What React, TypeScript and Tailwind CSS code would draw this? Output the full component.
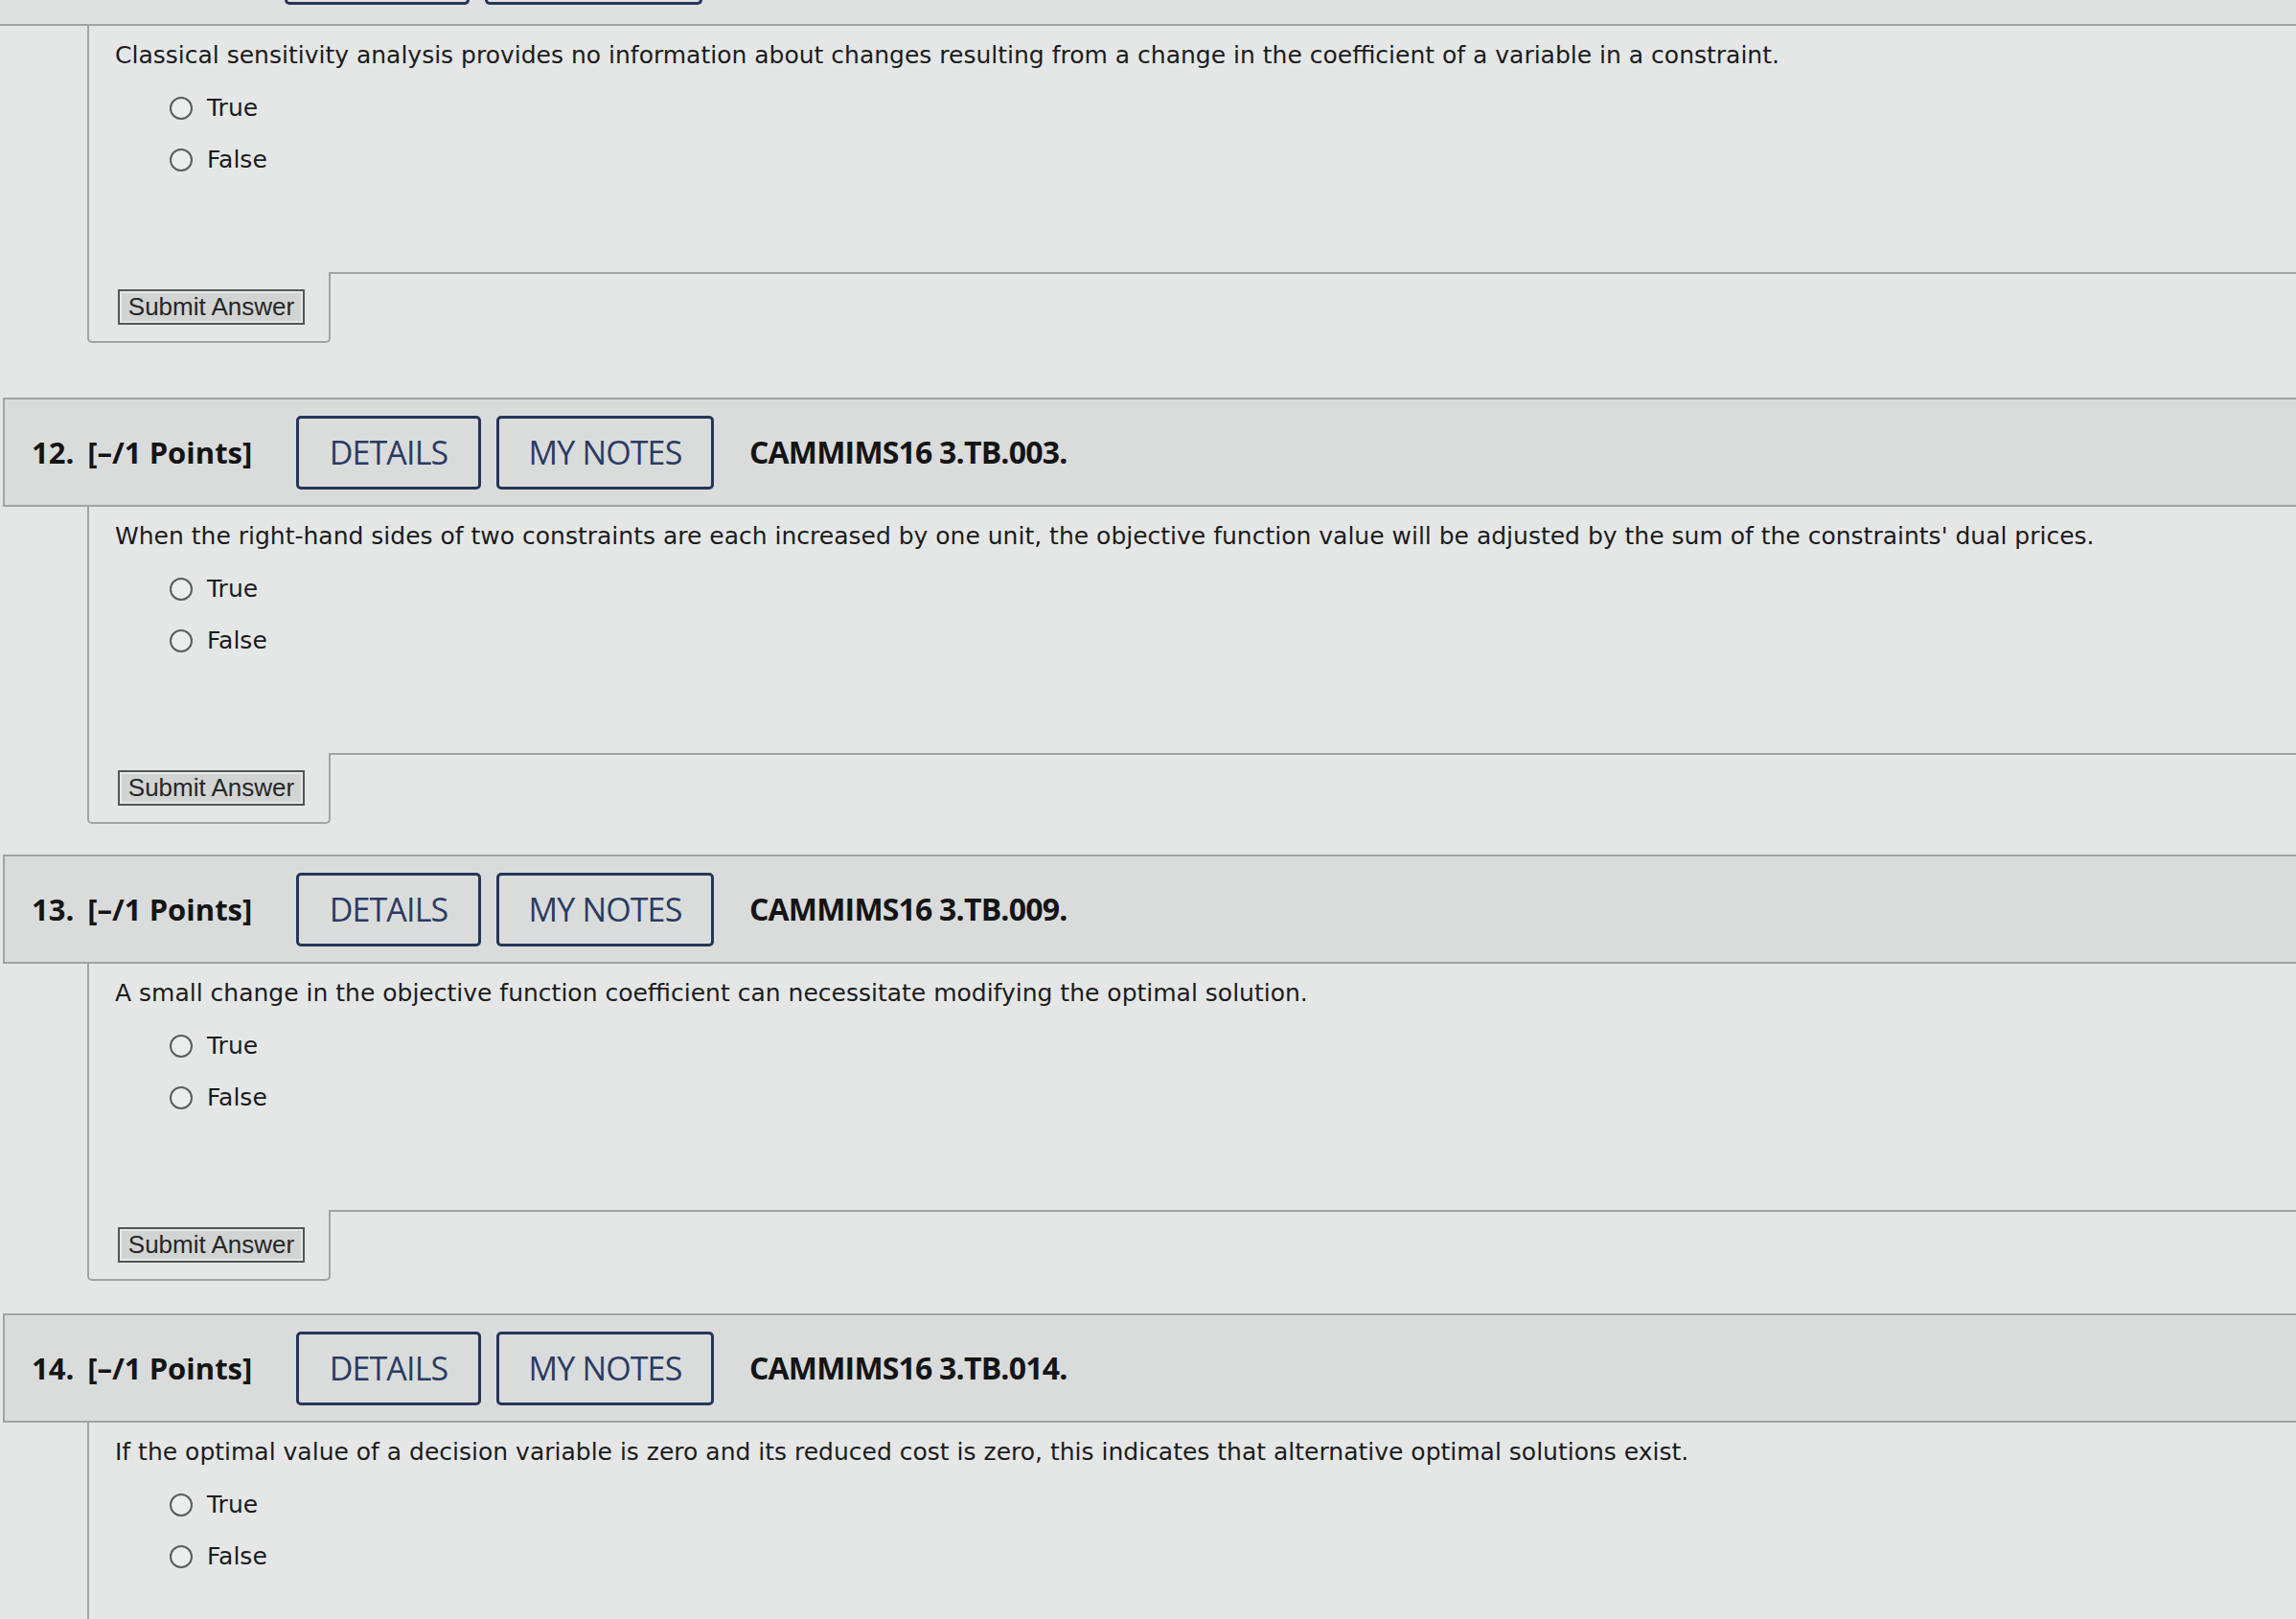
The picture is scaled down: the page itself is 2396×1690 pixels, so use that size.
import React from 'react';

const QUESTIONS = [
  {
    num: 11,
    code: 'CAMMIMS16 3.TB.002.',
    text: 'Classical sensitivity analysis provides no information about changes resulting from a change in the coefficient of a variable in a constraint.',
    gap: 'mb-[57px]',
  },
  {
    num: 12,
    code: 'CAMMIMS16 3.TB.003.',
    text: "When the right-hand sides of two constraints are each increased by one unit, the objective function value will be adjusted by the sum of the constraints' dual prices.",
    gap: 'mb-[32px]',
  },
  {
    num: 13,
    code: 'CAMMIMS16 3.TB.009.',
    text: 'A small change in the objective function coefficient can necessitate modifying the optimal solution.',
    gap: 'mb-[34px]',
  },
  {
    num: 14,
    code: 'CAMMIMS16 3.TB.014.',
    text: 'If the optimal value of a decision variable is zero and its reduced cost is zero, this indicates that alternative optimal solutions exist.',
    gap: 'mb-[34px]',
  },
];

const verdana = { fontFamily: '"DejaVu Sans", Verdana, sans-serif' };
const openSans = { fontFamily: '"Open Sans", "Noto Sans", sans-serif' };

function Radio({ label }: { label: string }) {
  return (
    <label className="flex items-center gap-[15px] h-[54px]">
      <span className="w-[24px] h-[24px] rounded-full border-2 border-[#5b5d5d] bg-[#eceeee]" />
      <span className="text-[25px] text-[#1b1b1b]" style={verdana}>{label}</span>
    </label>
  );
}

// previous question's header, scrolled almost out of view: only the button bottoms show
function TopStrip() {
  return (
    <div className="h-[27px] bg-[#dfe1e1] border-b-2 border-[#a2a4a4] flex items-start pl-[297px] gap-[16px]">
      <div className="w-[193px] h-[5px] border-x-[3px] border-b-[3px] border-[#253658] rounded-b-[5px]" />
      <div className="w-[227px] h-[5px] border-x-[3px] border-b-[3px] border-[#253658] rounded-b-[5px]" />
    </div>
  );
}

function Header({ q }: { q: (typeof QUESTIONS)[number] }) {
  return (
    <div className="ml-[3px] h-[114px] bg-[#dadcdc] border-y-2 border-l-2 border-[#a2a4a4] flex items-center pl-[28px]" style={openSans}>
      <div className="flex items-center gap-[14px] text-[31px] font-bold text-[#141414] w-[246px]">
        <span>{q.num}.</span>
        <span>[–/1 Points]</span>
      </div>
      <div className="flex items-center gap-[16px] ml-[30px]">
        <button className="w-[193px] h-[77px] border-[3px] border-[#253658] rounded-[5px] text-[34px] text-[#2a3b63] font-medium tracking-tight">DETAILS</button>
        <button className="w-[227px] h-[77px] border-[3px] border-[#253658] rounded-[5px] text-[34px] text-[#2a3b63] font-medium tracking-tight">MY NOTES</button>
      </div>
      <span className="ml-[37px] text-[32px] font-bold text-[#141414] tracking-tight">{q.code}</span>
    </div>
  );
}

function Question({ q, showHeader }: { q: (typeof QUESTIONS)[number]; showHeader: boolean }) {
  return (
    <section className={q.gap}>
      {showHeader ? <Header q={q} /> : <TopStrip />}

      {/* Body */}
      <div className="ml-[91px]">
        <div className="border-l-2 border-[#a2a4a4] pl-[27px] pt-[15px] h-[257px]">
          <p className="text-[25px] leading-[32px] text-[#1b1b1b] whitespace-nowrap" style={verdana}>{q.text}</p>
          <div className="pl-[57px] mt-[12px]">
            <Radio label="True" />
            <Radio label="False" />
          </div>
        </div>
        <div className="flex">
          <div className="w-[254px] h-[74px] border-l-2 border-r-2 border-b-2 border-[#a2a4a4] rounded-b-[5px] pl-[30px] flex items-center">
            <button
              className="w-[195px] h-[37px] border-2 border-[#545656] bg-[#d2d4d4] shadow-[inset_0_0_0_2px_#e6e8e8] text-[26px] leading-none text-[#262626]"
              style={{ fontFamily: '"Liberation Sans", Arial, sans-serif' }}
            >
              Submit Answer
            </button>
          </div>
          <div className="flex-1 border-t-2 border-[#a2a4a4]" />
        </div>
      </div>
    </section>
  );
}

export default function App() {
  return (
    <div className="w-[2396px] h-[1690px] overflow-hidden bg-[#e5e7e7]">
      {QUESTIONS.map((q, i) => (
        <Question key={q.num} q={q} showHeader={i > 0} />
      ))}
    </div>
  );
}
